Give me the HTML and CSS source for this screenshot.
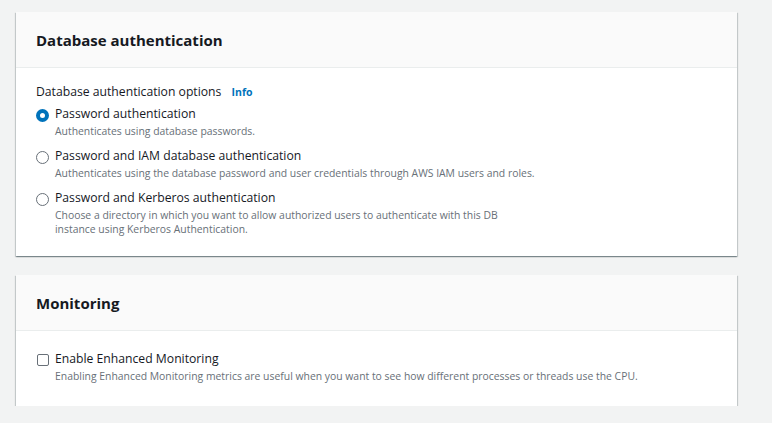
FILE: index.html
```html
<!DOCTYPE html>
<html>
<head>
<meta charset="utf-8">
<link rel="stylesheet" href="styles.css">
</head>
<body>
<div class="page">
  <section class="card">
    <div class="card-header"><h2 class="card-title">Database authentication</h2></div>
    <div class="card-body auth-body">
      <div class="field-label">Database authentication options <span class="info">Info</span></div>
      <div class="options">
        <div class="option">
          <span class="radio checked"></span>
          <div class="option-text">
            <div class="option-label">Password authentication</div>
            <div class="option-desc">Authenticates using database passwords.</div>
          </div>
        </div>
        <div class="option">
          <span class="radio"></span>
          <div class="option-text">
            <div class="option-label">Password and IAM database authentication</div>
            <div class="option-desc">Authenticates using the database password and user credentials through AWS IAM users and roles.</div>
          </div>
        </div>
        <div class="option">
          <span class="radio"></span>
          <div class="option-text">
            <div class="option-label">Password and Kerberos authentication</div>
            <div class="option-desc narrow">Choose a directory in which you want to allow authorized users to authenticate with this DB instance using Kerberos Authentication.</div>
          </div>
        </div>
      </div>
    </div>
  </section>
  <section class="card">
    <div class="card-header"><h2 class="card-title">Monitoring</h2></div>
    <div class="card-body mon-body">
      <div class="option">
        <span class="checkbox"></span>
        <div class="option-text">
          <div class="option-label">Enable Enhanced Monitoring</div>
          <div class="option-desc">Enabling Enhanced Monitoring metrics are useful when you want to see how different processes or threads use the CPU.</div>
        </div>
      </div>
    </div>
  </section>
</div>
</body>
</html>
```
FILE: styles.css
```css
html, body {
  margin: 0;
  padding: 0;
  background: #f2f3f3;
  font-family: "Open Sans", "Noto Sans", sans-serif;
  color: #16191f;
}
.page {
  padding: 12px 35px 0 16px;
  display: flex;
  flex-direction: column;
  gap: 19px;
}
.card {
  background: #fff;
  box-shadow: 0 1px 1px 0 rgba(0,28,36,0.3), 1px 1px 1px 0 rgba(0,28,36,0.15), -1px 1px 1px 0 rgba(0,28,36,0.15);
}
.card-header {
  background: #fafafa;
  border-bottom: 1px solid #eaeded;
  height: 55px;
  display: flex;
  align-items: center;
  padding: 0 20px;
}
.card-title {
  margin: 0;
  font-size: 15px;
  font-weight: 700;
  line-height: 22px;
  padding-top: 1px;
}
.card-body {
  padding: 13px 20px 20px;
}
.field-label {
  font-size: 12.2px;
  line-height: 22px;
  margin-bottom: 1px;
}
.info {
  color: #0073bb;
  font-size: 10.5px;
  font-weight: 700;
  margin-left: 7px;
}
.options {
  display: flex;
  flex-direction: column;
  gap: 8px;
}
.option {
  display: flex;
  align-items: flex-start;
  gap: 6px;
}
.radio {
  flex: none;
  width: 13px;
  height: 13px;
  box-sizing: border-box;
  border: 1px solid #687078;
  border-radius: 50%;
  margin-top: 5px;
}
.radio.checked {
  border: 4px solid #0073bb;
}
.checkbox {
  flex: none;
  width: 12px;
  height: 12px;
  box-sizing: border-box;
  border: 1px solid #687078;
  border-radius: 2px;
  margin-top: 5px;
  margin-left: 1px;
}
.option-label {
  font-size: 12.2px;
  line-height: 20px;
}
.option-desc {
  font-size: 10.4px;
  line-height: 14px;
  color: #687078;
}
.option-desc.narrow {
  max-width: 470px;
}
.mon-body {
  padding: 18px 20px 23px;
}
```
